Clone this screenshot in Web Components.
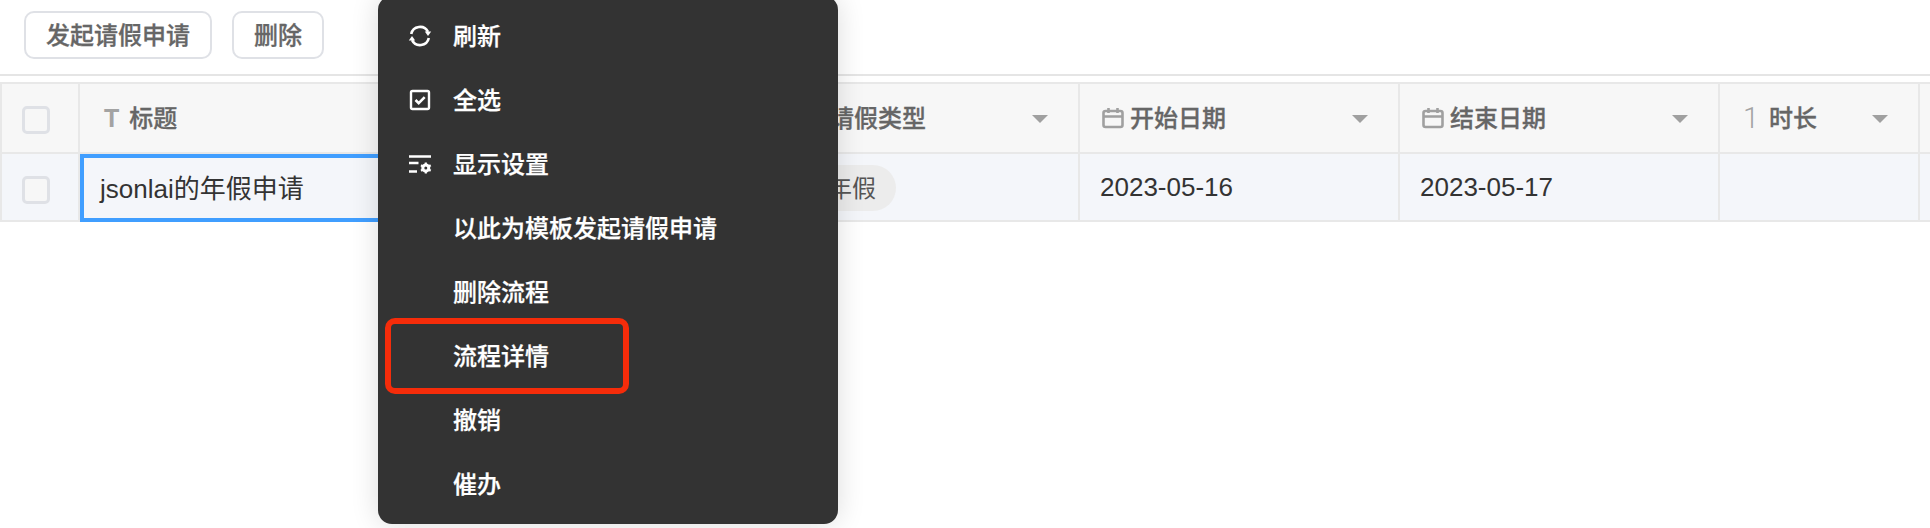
<!DOCTYPE html>
<html lang="zh">
<head>
<meta charset="utf-8">
<title>请假申请</title>
<style>
    html, body {
        margin: 0;
        height: 100%;
        overflow: hidden;
        background: #fff;
        font-family: "Liberation Sans", "Noto Sans CJK SC", sans-serif;
    }
</style>
</head>
<body>
<leave-page>
    <tool-bar>
        <tool-button>发起请假申请</tool-button>
        <tool-button>删除</tool-button>
    </tool-bar>
    <data-grid>
        <head-cell><check-box></check-box></head-cell>
        <head-cell kind="text">标题</head-cell>
        <head-cell kind="select" arrow>请假类型</head-cell>
        <head-cell kind="date" arrow>开始日期</head-cell>
        <head-cell kind="date" arrow>结束日期</head-cell>
        <head-cell kind="number" arrow>时长</head-cell>
        <head-cell></head-cell>

        <body-cell><check-box></check-box></body-cell>
        <body-cell selected>jsonlai的年假申请</body-cell>
        <body-cell tagged><tag-pill>年假</tag-pill></body-cell>
        <body-cell>2023-05-16</body-cell>
        <body-cell>2023-05-17</body-cell>
        <body-cell></body-cell>
        <body-cell></body-cell>
    </data-grid>
    <context-menu>
        <menu-item>
            <svg slot="icon" width="24" height="24" viewBox="0 0 24 24" fill="none" stroke="#fff" stroke-width="2.600">
                <path d="M3.200 10A9 9 0 0 1 20 7.800"/>
                <path d="M20.800 14A9 9 0 0 1 4 16.200"/>
                <path d="M23.200 7.500H16.800L20 12z" fill="#fff" stroke="none"/>
                <path d="M.8 16.500H7.200L4 12z" fill="#fff" stroke="none"/>
            </svg>
            刷新
        </menu-item>
        <menu-item>
            <svg slot="icon" width="24" height="24" viewBox="0 0 24 24" fill="none" stroke="#fff">
                <rect x="3" y="3" width="18" height="18" rx="1.500" stroke-width="2.400"/>
                <path d="M7.500 12l3.200 3.200 6-6" stroke-width="2.600"/>
            </svg>
            全选
        </menu-item>
        <menu-item>
            <svg slot="icon" width="24" height="24" viewBox="0 0 24 24" fill="none" stroke="#fff">
                <path d="M1 4.500H23M1 11H10.500M1 19.500H9" stroke-width="2.500"/>
                <circle cx="17.800" cy="16" r="3" stroke-width="3"/>
                <path d="M17.800 10.500v2M17.800 19.500v2M13 13.200l1.700 1M21 17.800l1.700 1M13 18.800l1.700-1M21 14.200l1.700-1" stroke-width="2.200"/>
            </svg>
            显示设置
        </menu-item>
        <menu-item>以此为模板发起请假申请</menu-item>
        <menu-item>删除流程</menu-item>
        <menu-item>流程详情</menu-item>
        <menu-item>撤销</menu-item>
        <menu-item>催办</menu-item>
    </context-menu>
    <red-mark></red-mark>
</leave-page>

<script>
class LeavePage extends HTMLElement {
    constructor(){
        super();
        this.attachShadow({mode: "open"});
    }
    connectedCallback(){
        this.shadowRoot.innerHTML = `
        <style>
            :host {
                display: block;
                position: relative;
                width: 1930px;
                height: 528px;
                overflow: hidden;
            }
        </style>
        <slot></slot>`;
    }
}

class ToolBar extends HTMLElement {
    constructor(){
        super();
        this.attachShadow({mode: "open"});
    }
    connectedCallback(){
        this.shadowRoot.innerHTML = `
        <style>
            :host {
                display: flex;
                gap: 20px;
                height: 63px;
                padding: 11px 24px 0;
                border-bottom: 2px solid #e5e5e5;
            }
        </style>
        <slot></slot>`;
    }
}

class ToolButton extends HTMLElement {
    constructor(){
        super();
        this.attachShadow({mode: "open"});
    }
    connectedCallback(){
        this.shadowRoot.innerHTML = `
        <style>
            :host {
                display: flex;
                align-items: center;
                box-sizing: border-box;
                height: 48px;
                padding: 0 20px 4px;
                border: 2px solid #dfe1e6;
                border-radius: 10px;
                color: #666;
                font-size: 24px;
                font-weight: 500;
                -webkit-text-stroke: .3px #666;
                background: #fff;
            }
        </style>
        <slot></slot>`;
    }
}

class DataGrid extends HTMLElement {
    constructor(){
        super();
        this.attachShadow({mode: "open"});
    }
    connectedCallback(){
        this.shadowRoot.innerHTML = `
        <style>
            :host {
                display: grid;
                grid-template-columns: 80px 700px 300px 320px 320px 200px 200px;
                grid-template-rows: 70px 68px;
                margin-top: 6px;
                border-top: 2px solid #e8e8e8;
            }
        </style>
        <slot></slot>`;
    }
}

const HEAD_ICONS = {
    text: `<span class="glyph t">T</span>`,
    number: `<span class="glyph n">1</span>`,
    select: `<span class="glyph s"></span>`,
    date: `<svg width="22" height="22" viewBox="0 0 22 22" fill="none" stroke="#a0a0a0" stroke-width="2.600">
            <rect x="1.500" y="4" width="19" height="16" rx="2"/>
            <path d="M1.500 9.500h19M6.500 1v5M15.500 1v5"/>
           </svg>`
};

class HeadCell extends HTMLElement {
    constructor(){
        super();
        this.attachShadow({mode: "open"});
    }
    connectedCallback(){
        const icon = HEAD_ICONS[this.getAttribute('kind')] || '';
        this.shadowRoot.innerHTML = `
        <style>
            :host {
                display: flex;
                align-items: center;
                box-sizing: border-box;
                padding: 0 30px 0 22px;
                background: #f7f7f7;
                border-right: 2px solid #e8e8e8;
                border-bottom: 2px solid #e8e8e8;
                color: #666;
                font-size: 24px;
                font-weight: 500;
            }
            :host(:first-child) {
                border-left: 2px solid #e8e8e8;
                padding: 0 0 0 20px;
            }
            ::slotted(check-box) { margin-top: 4px; }
            .icon { display: flex; align-items: center; margin-right: 6px; }
            .glyph { display: block; color: #a3a3a3; }
            .t { font-size: 25px; font-weight: 700; margin: 0 4px 0 2px; }
            .n { font-family: Roboto, sans-serif; font-size: 29px; font-weight: 300; margin: 0 4px 0 1px; }
            .s { width: 22px; }
            .label { flex: 1; white-space: nowrap; margin-bottom: 4px; -webkit-text-stroke: .3px #666; }
            .arrow {
                width: 0;
                height: 0;
                margin-top: 2px;
                border-left: 8px solid transparent;
                border-right: 8px solid transparent;
                border-top: 8px solid #a0a0a0;
            }
        </style>
        ${icon ? `<span class="icon">${icon}</span>` : ''}
        ${this.getAttribute('kind') ? '<span class="label"><slot></slot></span>' : '<slot></slot>'}
        ${this.hasAttribute('arrow') ? '<span class="arrow"></span>' : ''}`;
    }
}

class BodyCell extends HTMLElement {
    constructor(){
        super();
        this.attachShadow({mode: "open"});
    }
    connectedCallback(){
        this.shadowRoot.innerHTML = `
        <style>
            :host {
                display: flex;
                align-items: center;
                box-sizing: border-box;
                padding: 0 20px;
                background: #f4f6fa;
                border-right: 2px solid #e8e8e8;
                border-bottom: 2px solid #e8e8e8;
                color: #333;
                font-size: 26px;
            }
            :host(:nth-child(7n+1)) {
                border-left: 2px solid #e8e8e8;
            }
            :host([selected]) {
                border: 4px solid #409eff;
                padding: 0 16px 4px;
            }
            :host([tagged]) {
                padding-left: 28px;
            }
            ::slotted(check-box) { margin-top: 6px; }
            ::slotted(tag-pill) { margin-top: 2px; }
        </style>
        <slot></slot>`;
    }
}

class CheckBox extends HTMLElement {
    constructor(){
        super();
        this.attachShadow({mode: "open"});
    }
    connectedCallback(){
        this.shadowRoot.innerHTML = `
        <style>
            :host {
                display: block;
                box-sizing: border-box;
                width: 28px;
                height: 28px;
                border: 3px solid #dfe1e6;
                border-radius: 5px;
                background: #f7f7f7;
            }
        </style>`;
    }
}

class TagPill extends HTMLElement {
    constructor(){
        super();
        this.attachShadow({mode: "open"});
    }
    connectedCallback(){
        this.shadowRoot.innerHTML = `
        <style>
            :host {
                display: flex;
                align-items: center;
                box-sizing: border-box;
                height: 46px;
                padding: 0 20px 4px;
                border-radius: 23px;
                background: #ececec;
                color: #555;
                font-size: 24px;
            }
        </style>
        <slot></slot>`;
    }
}

class ContextMenu extends HTMLElement {
    constructor(){
        super();
        this.attachShadow({mode: "open"});
    }
    connectedCallback(){
        this.shadowRoot.innerHTML = `
        <style>
            :host {
                display: block;
                position: absolute;
                left: 378px;
                top: -4px;
                width: 460px;
                box-sizing: border-box;
                padding: 8px 0;
                background: #333;
                border-radius: 14px;
                box-shadow: 0 0 28px rgba(0, 0, 0, .14);
            }
        </style>
        <slot></slot>`;
    }
}

class MenuItem extends HTMLElement {
    constructor(){
        super();
        this.attachShadow({mode: "open"});
    }
    connectedCallback(){
        this.shadowRoot.innerHTML = `
        <style>
            :host {
                display: flex;
                align-items: center;
                height: 64px;
                color: #fff;
                font-size: 24px;
                font-weight: 500;
            }
            .icon {
                display: flex;
                justify-content: center;
                width: 24px;
                margin: 0 21px 0 30px;
            }
            .label { margin-bottom: 4px; -webkit-text-stroke: .25px #fff; }
        </style>
        <span class="icon"><slot name="icon"></slot></span>
        <span class="label"><slot></slot></span>`;
    }
}

class RedMark extends HTMLElement {
    constructor(){
        super();
        this.attachShadow({mode: "open"});
    }
    connectedCallback(){
        this.shadowRoot.innerHTML = `
        <style>
            :host {
                display: block;
                position: absolute;
                left: 385px;
                top: 318px;
                width: 244px;
                height: 76px;
                box-sizing: border-box;
                border: 6px solid #f52c0a;
                border-radius: 10px;
            }
        </style>`;
    }
}

customElements.define('leave-page', LeavePage);
customElements.define('tool-bar', ToolBar);
customElements.define('tool-button', ToolButton);
customElements.define('data-grid', DataGrid);
customElements.define('head-cell', HeadCell);
customElements.define('body-cell', BodyCell);
customElements.define('check-box', CheckBox);
customElements.define('tag-pill', TagPill);
customElements.define('context-menu', ContextMenu);
customElements.define('menu-item', MenuItem);
customElements.define('red-mark', RedMark);
</script>
</body>
</html>
